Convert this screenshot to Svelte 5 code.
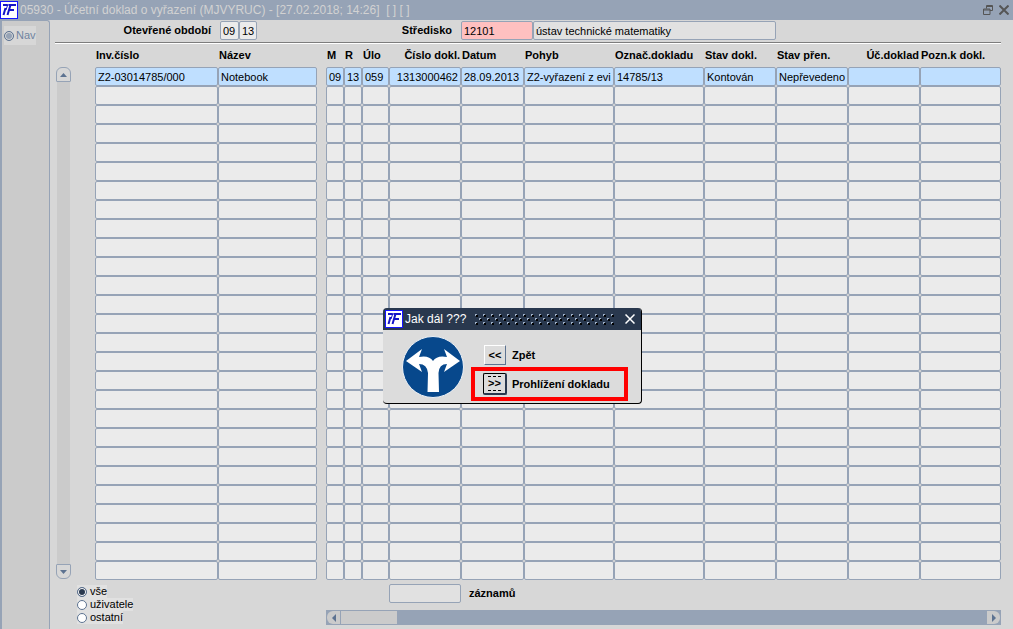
<script lang="ts">
  type Column = { title: string; width: number; right?: boolean };

  const leftColumns: Column[] = [
    { title: 'Inv.číslo', width: 123 },
    { title: 'Název', width: 99 }
  ];

  const rightColumns: Column[] = [
    { title: 'M', width: 18 },
    { title: 'R', width: 18 },
    { title: 'Úlo', width: 27 },
    { title: 'Číslo dokl.', width: 72, right: true },
    { title: 'Datum', width: 63 },
    { title: 'Pohyb', width: 90 },
    { title: 'Označ.dokladu', width: 90 },
    { title: 'Stav dokl.', width: 72 },
    { title: 'Stav přen.', width: 72 },
    { title: 'Úč.doklad', width: 72, right: true },
    { title: 'Pozn.k dokl.', width: 81 }
  ];

  const leftRow = ['Z2-03014785/000', 'Notebook'];
  const rightRow = [
    '09', '13', '059', '1313000462', '28.09.2013', 'Z2-vyřazení z evi',
    '14785/13', 'Kontován', 'Nepřevedeno', '', ''
  ];

  const rows = Array.from({ length: 27 }, (_, i) => i);
  const filters = ['vše', 'uživatele', 'ostatní'];

  let month = $state('09');
  let year = $state('13');
  let center = $state('12101');
  let centerName = $state('ústav technické matematiky');
  let count = $state('');
  let filter = $state('vše');
  let dialogOpen = $state(true);

  const percent = (column: Column, columns: Column[]) =>
    (column.width / columns.reduce((sum, c) => sum + c.width, 0)) * 100;
</script>

{#snippet logo()}
  <svg class="logo" viewBox="0 0 18 18" aria-hidden="true">
    <rect x="0.5" y="0.5" width="17" height="17" fill="#fff" stroke="#1414ff" />
    <path d="M3 4h4.500M5.500 7L3.500 14" fill="none" stroke="#1414c8" stroke-width="2" />
    <path d="M8.500 4h7.500M10.500 4L7.500 14M9 9h5" fill="none" stroke="#1414c8" stroke-width="2" />
    <path d="M8 3L6 9" fill="none" stroke="#1414c8" stroke-width="1" />
  </svg>
{/snippet}

{#snippet grid(columns: Column[], first: string[])}
  <table>
    <colgroup>
      {#each columns as column}
        <col style="width: {percent(column, columns)}%" />
      {/each}
    </colgroup>
    <thead>
      <tr>
        {#each columns as column}
          <th class:right={column.right}>{column.title}</th>
        {/each}
      </tr>
    </thead>
    <tbody>
      {#each rows as row}
        <tr class:current={row === 0}>
          {#each columns as column, i}
            <td class:right={column.right}>{row === 0 ? first[i] : ''}</td>
          {/each}
        </tr>
      {/each}
    </tbody>
  </table>
{/snippet}

<div class="app">
  <header class="titlebar">
    {@render logo()}
    <h1>05930 - Účetní doklad o vyřazení (MJVYRUC) - [27.02.2018; 14:26]&nbsp; [ ] [ ]</h1>
    <button class="window-button" aria-label="Obnovit">
      <svg width="10" height="10" viewBox="0 0 10 10" fill="none" stroke="#555">
        <path d="M3.500 3.500V0.500h6v5H7M3 1.500h6.500M0.500 4h6.500v5.500h-6.500zM0.500 5h6.500" />
      </svg>
    </button>
    <button class="window-button" aria-label="Zavřít">
      <svg width="10" height="10" viewBox="0 0 10 10" stroke="#555" stroke-width="2">
        <path d="M0.500 0.500l9 9M9.500 0.500l-9 9" />
      </svg>
    </button>
  </header>

  <div class="body">
    <aside>
      <label class="nav"><input type="radio" name="nav" disabled />Nav</label>
    </aside>

    <main>
      <div class="toolbar">
        <label class="period" for="month">Otevřené období</label>
        <input id="month" class="field month" bind:value={month} />
        <input class="field year" aria-label="Rok" bind:value={year} />
        <label class="center-label" for="center">Středisko</label>
        <input id="center" class="field center" bind:value={center} />
        <input class="field center-name" aria-label="Název střediska" bind:value={centerName} />
      </div>

      <div class="tables">
        <div class="vscroll">
          <button class="up" aria-label="Nahoru">
            <svg width="7" height="4" viewBox="0 0 7 4"><path d="M0 4L3.500 0L7 4z" /></svg>
          </button>
          <div class="track"></div>
          <button class="down" aria-label="Dolů">
            <svg width="7" height="4" viewBox="0 0 7 4"><path d="M0 0h7L3.500 4z" /></svg>
          </button>
        </div>
        {@render grid(leftColumns, leftRow)}
        {@render grid(rightColumns, rightRow)}
      </div>

      <footer>
        <div class="filters">
          {#each filters as name}
            <label><input type="radio" value={name} bind:group={filter} />{name}</label>
          {/each}
        </div>
        <div class="summary">
          <div class="count">
            <input id="count" class="field" bind:value={count} />
            <label for="count">záznamů</label>
          </div>
          <div class="hscroll">
            <button class="prev" aria-label="Vlevo">
              <svg width="4" height="8" viewBox="0 0 4 8"><path d="M4 0v8L0 4z" /></svg>
            </button>
            <div class="thumb"></div>
            <button class="next" aria-label="Vpravo">
              <svg width="4" height="8" viewBox="0 0 4 8"><path d="M0 0v8L4 4z" /></svg>
            </button>
          </div>
        </div>
      </footer>
    </main>
  </div>

  {#if dialogOpen}
    <div class="dialog" role="dialog" aria-labelledby="dialog-title">
      <div class="dialog-bar">
        {@render logo()}
        <h2 id="dialog-title">Jak dál ???</h2>
        <svg class="grip" aria-hidden="true">
          <defs>
            <pattern id="dots" width="8" height="8" patternUnits="userSpaceOnUse">
              <path d="M1 1h2v2h-2zM5 5h2v2h-2z" fill="#000" />
              <path d="M0 0h2v1h-1v1h-1zM4 4h2v1h-1v1h-1z" fill="#9fb0c6" />
            </pattern>
          </defs>
          <rect width="100%" height="100%" fill="url(#dots)" />
        </svg>
        <button class="close" aria-label="Zavřít" onclick={() => (dialogOpen = false)}>
          <svg width="10" height="10" viewBox="0 0 10 10" stroke="#fff" stroke-width="1.5">
            <path d="M0.500 0.500l9 9M9.500 0.500l-9 9" />
          </svg>
        </button>
      </div>
      <div class="dialog-body">
        <svg class="sign" viewBox="0 0 62 62" aria-hidden="true">
          <circle cx="31" cy="31" r="30.500" fill="#07488c" stroke="#eef2f6" />
          <path
            d="M4 25L20 13L17 21Q27 19 31 25Q35 19 45 21L42 13L58 25L42 36L45 28Q37 28 36.500 37L37 56H25.500L26 37Q25 28 17 28L20 36z"
            fill="#fff"
          />
        </svg>
        <div class="choices">
          <div class="choice">
            <button id="back">&lt;&lt;</button>
            <label for="back">Zpět</label>
          </div>
          <div class="choice marked">
            <button id="view" class="default"><span>&gt;&gt;</span></button>
            <label for="view">Prohlížení dokladu</label>
          </div>
        </div>
      </div>
    </div>
  {/if}
</div>

<style>
  :global(body) {
    margin: 0;
    background: #d7d7d7;
  }

  * {
    box-sizing: border-box;
  }

  .app {
    position: relative;
    display: flex;
    flex-direction: column;
    min-height: 100vh;
    font: 11px/13px 'Liberation Sans', Arial, sans-serif;
    color: #000;
  }

  button,
  input {
    margin: 0;
    padding: 0;
    font: inherit;
    color: inherit;
  }

  button {
    display: flex;
    align-items: center;
    justify-content: center;
    border: 0;
    background: none;
  }

  h1,
  h2 {
    margin: 0;
    font-size: 12px;
    font-weight: 400;
    white-space: nowrap;
  }

  .logo {
    width: 18px;
    height: 18px;
  }

  .titlebar {
    display: flex;
    align-items: center;
    gap: 2px;
    height: 20px;
    padding-right: 2px;
    background: #96a3b6;
  }

  h1 {
    flex: 1;
    color: #d2d2d2;
  }

  .window-button {
    width: 14px;
    height: 18px;
  }

  .body {
    display: flex;
    flex: 1;
  }

  aside {
    width: 50px;
    padding: 5px 2px;
    background: #cbcbcb;
    border: solid #96a3b6;
    border-width: 1px 1px 0 2px;
    border-top-right-radius: 3px;
  }

  .nav {
    display: flex;
    align-items: center;
    gap: 2px;
    width: 32px;
    height: 19px;
    background: #d7d7d7;
    color: #7084a0;
  }

  input[type='radio'] {
    appearance: none;
    flex: none;
    width: 10px;
    height: 10px;
    border: 1px solid #5d7391;
    border-radius: 50%;
    background: #fff;
  }

  input[type='radio']:checked {
    background: #29384e;
    box-shadow: inset 0 0 0 1px #fff;
  }

  input[type='radio']:disabled {
    background: #96a3b6;
    box-shadow: inset 0 0 0 1px #d7d7d7;
  }

  main {
    flex: 1;
    min-width: 0;
    padding: 1px 12px 0 5px;
  }

  .toolbar {
    display: flex;
    align-items: center;
    height: 22px;
    padding-bottom: 2px;
    border-bottom: 1px solid #7d7d7d;
    box-shadow: 0 1px #fff;
    font-weight: 700;
    text-align: right;
  }

  .period {
    width: 156px;
    margin-right: 9px;
  }

  .center-label {
    width: 195px;
    margin-right: 9px;
  }

  .field {
    height: 19px;
    padding: 0 2px;
    border: 1px solid #96a3b6;
    border-radius: 2px;
    background: #e1e1e1;
    font-weight: 400;
  }

  .month,
  .year {
    width: 19px;
    background: #ebebeb;
  }

  .year {
    width: 18px;
  }

  .center {
    width: 72px;
    background: #ffc0c0;
  }

  .center-name {
    width: 243px;
  }

  .tables {
    display: grid;
    grid-template-columns: 30px 222px 1fr;
    column-gap: 9px;
    padding-left: 1px;
  }

  .vscroll {
    display: flex;
    flex-direction: column;
    padding-top: 24px;
    padding-bottom: 1px;
  }

  .vscroll button {
    width: 15px;
    height: 15px;
    border: 1px solid #96a3b6;
  }

  .vscroll .up {
    border-radius: 6px 6px 1px 1px;
  }

  .vscroll .down {
    border-radius: 1px 1px 6px 6px;
  }

  .vscroll path,
  .hscroll path {
    fill: #5d7391;
  }

  .track {
    flex: 1;
    width: 13px;
    margin-left: 1px;
    background: #cbcbcb;
  }

  table {
    width: 100%;
    table-layout: fixed;
    border-collapse: separate;
    border-spacing: 0;
  }

  th {
    height: 24px;
    padding: 0 1px;
    text-align: left;
    white-space: nowrap;
  }

  td {
    height: 19px;
    padding: 1px 2px 0;
    overflow: hidden;
    border: 1px solid #96a3b6;
    border-radius: 2px;
    background: #ebebeb;
    white-space: nowrap;
  }

  .current td {
    background: #bfdfff;
  }

  .right {
    text-align: right;
  }

  footer {
    display: grid;
    grid-template-columns: 249px 1fr;
    column-gap: 22px;
  }

  .filters {
    padding: 5px 0 0 22px;
  }

  .filters label {
    display: flex;
    align-items: center;
    gap: 3px;
    width: max-content;
    height: 13px;
    background: #e1e1e1;
  }

  .summary {
    display: flex;
    flex-direction: column;
    gap: 7px;
    padding-top: 4px;
  }

  .count {
    display: flex;
    align-items: center;
    gap: 8px;
    padding-left: 63px;
    font-weight: 700;
  }

  .count .field {
    width: 72px;
  }

  .hscroll {
    display: flex;
    height: 15px;
    padding: 1px;
    background: #96a3b6;
  }

  .hscroll button {
    width: 13px;
    background: #cbcbcb;
  }

  .hscroll .prev {
    border-radius: 6px 0 0 6px;
  }

  .hscroll .next {
    margin-left: auto;
    border-radius: 0 6px 6px 0;
  }

  .thumb {
    width: 56px;
    margin-left: 1px;
    background: #cbcbcb;
  }

  .dialog {
    position: absolute;
    left: 383px;
    top: 308px;
    width: 259px;
    border: solid #000;
    border-width: 0 1px 1px 0;
    border-radius: 4px;
    overflow: hidden;
    background: #dcdcdc;
  }

  .dialog-bar {
    display: flex;
    align-items: center;
    height: 22px;
    padding: 0 5px 0 2px;
    gap: 2px;
    background: #29384e;
    color: #fff;
  }

  .grip {
    flex: 1;
    min-width: 0;
    height: 11px;
    margin: 0 7px;
  }

  .close {
    width: 12px;
    height: 18px;
  }

  .dialog-body {
    display: flex;
    gap: 7px;
    padding: 6px 0 2px 19px;
  }

  .sign {
    width: 62px;
    height: 62px;
  }

  .choices {
    display: flex;
    flex-direction: column;
    gap: 2px;
    padding-top: 9px;
  }

  .choice {
    display: flex;
    align-items: center;
    gap: 6px;
    padding-left: 13px;
    font-weight: 700;
  }

  .choice button {
    width: 22px;
    height: 20px;
    border: 1px solid;
    border-color: #fff #5d7391 #5d7391 #fff;
    background: #dcdcdc;
  }

  .choice button.default {
    width: 24px;
    height: 22px;
    border: 2px solid #29384e;
    border-top: 1px solid #000;
    border-left: 1px solid #000;
    border-radius: 2px;
  }

  .default span {
    border: dashed #000;
    border-width: 1px 0;
  }

  .choice.marked {
    width: 157px;
    height: 34px;
    padding-left: 8px;
    gap: 5px;
    border: 4px solid #f00;
  }
</style>
